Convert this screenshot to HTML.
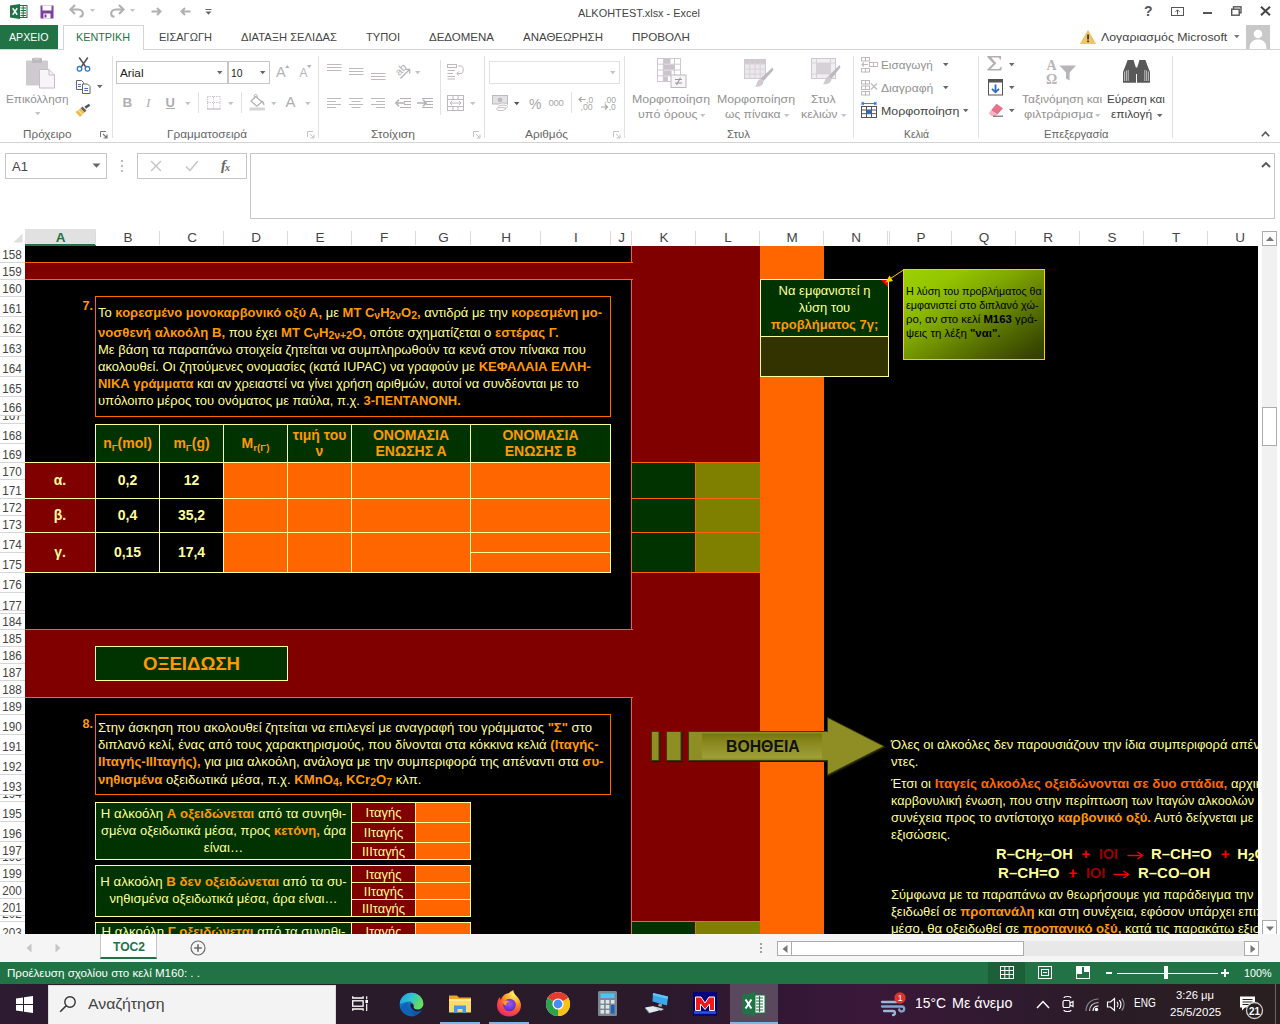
<!DOCTYPE html>
<html><head><meta charset="utf-8">
<style>
*{box-sizing:border-box;margin:0;padding:0}
html,body{width:1280px;height:1024px;overflow:hidden;background:#fff;font-family:"Liberation Sans",sans-serif;}
.a{position:absolute}
#root{position:absolute;left:0;top:0;width:1280px;height:1024px;overflow:hidden;background:#fff}
#title{left:0;top:0;width:1280px;height:25px;background:#fff}
.tab{top:25px;height:24px;font-size:12.5px;color:#444;line-height:25px;white-space:nowrap}
#ribbon{left:0;top:49px;width:1280px;height:94px;background:#fff;border-top:1px solid #d4d4d4;border-bottom:1px solid #d4d4d4}
.gl{font-size:12px;color:#666;top:127px;line-height:14px;white-space:nowrap}
.rl{font-size:12px;color:#a6a6a6;line-height:14px;white-space:nowrap}
.sep{width:1px;background:#e1e1e1;top:56px;height:82px}
#grid{left:0;top:0;width:1258px;height:934px;background:#000;overflow:hidden;clip-path:inset(246px 0 0 25px)}
.ch{top:229px;height:16px;font-size:13.5px;color:#444;text-align:center;line-height:17px}
.rh{left:0;width:25px;font-size:13px;color:#444;text-align:center;background:#fff;overflow:hidden;white-space:nowrap}
.o{color:#ff9900;font-weight:bold}
.y{color:#ffff99}
.t{white-space:nowrap}
.bx{font-size:13px;line-height:15px}
.bx b{font-weight:bold}
.tg{font-size:13.6px;text-align:center;line-height:17px;transform:scaleX(0.95)}
.cm{font-size:11px;color:#000;line-height:14px}
.eq{font-size:14.67px;line-height:17px}
.pl{color:#ff0000;padding:0 3px}
.io{color:#990000;padding:0 3px}
.ar{color:#ff0000;padding:0 3px}
.hl{height:1px;background:#ffff99}
.vl{width:1px;background:#ffff99}
.hc{font-size:14px;font-weight:bold;text-align:center;line-height:16px}
.hc sub{font-size:70%;top:0.3em}
.sm{transform:scaleX(1.018)}
sub{font-size:80%;vertical-align:baseline;position:relative;top:0.24em;line-height:0}
</style></head><body><div id="root">
<style>
#b7l1{transform-origin:0 0;transform:scaleX(0.9993)}
#b7l2{transform-origin:0 0;transform:scaleX(1.0106)}
#b7l3{transform-origin:0 0;transform:scaleX(0.9992)}
#b7l4{transform-origin:0 0;transform:scaleX(0.9990)}
#b7l5{transform-origin:0 0;transform:scaleX(0.9946)}
#b7l6{transform-origin:0 0;transform:scaleX(0.9991)}
#b8l1{transform-origin:0 0;transform:scaleX(1.0090)}
#b8l2{transform-origin:0 0;transform:scaleX(1.0123)}
#b8l3{transform-origin:0 0;transform:scaleX(1.0156)}
#b8l4{transform-origin:0 0;transform:scaleX(1.0094)}
#c1{transform-origin:0 0;transform:scaleX(0.9742)}
#c2{transform-origin:0 0;transform:scaleX(0.9842)}
#c3{transform-origin:0 0;transform:scaleX(1.0326)}
#c4{transform-origin:0 0;transform:scaleX(1.0383)}
#voi{transform-origin:0 0;transform:scaleX(0.9877)}
#r4{transform-origin:0 0;transform:scaleX(0.9757)}
#r5{transform-origin:0 0;transform:scaleX(1.0053)}
#e1a{transform-origin:0 0;transform:scaleX(1.0042)}
#e1c{transform-origin:0 0;transform:scaleX(0.9618)}
#e1e{transform-origin:0 0;transform:scaleX(1.0140)}
#e2a{transform-origin:0 0;transform:scaleX(1.0289)}
#e2c{transform-origin:0 0;transform:scaleX(0.9824)}
#e2e{transform-origin:0 0;transform:scaleX(1.0204)}
#r1{transform-origin:0 0;transform:scaleX(1.0000)}
#r3{transform-origin:0 0;transform:scaleX(1.0052)}
#r7{transform-origin:0 0;transform:scaleX(0.9906)}
#r8{transform-origin:0 0;transform:scaleX(1.0070)}
#r9{transform-origin:0 0;transform:scaleX(1.0124)}
</style>
<!-- TITLE BAR -->
<div id="title" class="a"></div>
<!-- RIBBON TABS -->
<div class="a" style="left:0;top:25px;width:58px;height:24px;background:#217346"></div>
<div id="ribbon" class="a"></div>
<div class="a" style="left:63px;top:25px;width:81px;height:25px;border:1px solid #d4d4d4;border-bottom:none;background:#fff"></div>
<!-- separators -->
<div class="a sep" style="left:112px"></div><div class="a sep" style="left:318px"></div><div class="a sep" style="left:484px"></div>
<div class="a sep" style="left:624px"></div><div class="a sep" style="left:853px"></div><div class="a sep" style="left:978px"></div><div class="a sep" style="left:1172px"></div>
<!-- font boxes -->
<div class="a" style="left:116px;top:61px;width:112px;height:23px;border:1px solid #c6c6c6;background:#fff"></div>
<div class="a" style="left:228px;top:61px;width:42px;height:23px;border:1px solid #c6c6c6;background:#fff"></div>
<div class="a" style="left:489px;top:61px;width:131px;height:23px;border:1px solid #e1e1e1;background:#fff"></div>
<!-- FORMULA BAR -->
<div class="a" style="left:5px;top:153px;width:102px;height:26px;border:1px solid #c6c6c6;background:#fff"></div>
<div class="a" style="left:137px;top:153px;width:110px;height:26px;border:1px solid #c6c6c6;background:#fff"></div>
<div class="a" style="left:250px;top:153px;width:1025px;height:66px;border:1px solid #c6c6c6;background:#fff"></div>
<div class="a t" id="ttl" style="left:578.0px;top:6.5px;font-size:11.6px;line-height:1;height:13.9px;color:#444;transform-origin:0 0;transform:scaleX(0.9421);">ALKOHTEST.xlsx - Excel</div>
<div class="a t" id="tb0" style="left:9.0px;top:31.1px;font-size:11.6px;line-height:1;height:13.9px;color:#fff;transform-origin:0 0;transform:scaleX(0.9149);z-index:5">ΑΡΧΕΙΟ</div>
<div class="a t" id="tb1" style="left:76.0px;top:31.1px;font-size:11.6px;line-height:1;height:13.9px;color:#217346;transform-origin:0 0;transform:scaleX(0.9313);z-index:5">ΚΕΝΤΡΙΚΗ</div>
<div class="a t" id="tb2" style="left:159.0px;top:31.1px;font-size:11.6px;line-height:1;height:13.9px;color:#444;transform-origin:0 0;transform:scaleX(0.9520);">ΕΙΣΑΓΩΓΗ</div>
<div class="a t" id="tb3" style="left:241.0px;top:31.1px;font-size:11.6px;line-height:1;height:13.9px;color:#444;transform-origin:0 0;transform:scaleX(0.9654);">ΔΙΑΤΑΞΗ ΣΕΛΙΔΑΣ</div>
<div class="a t" id="tb4" style="left:366.0px;top:31.1px;font-size:11.6px;line-height:1;height:13.9px;color:#444;transform-origin:0 0;transform:scaleX(0.9594);">ΤΥΠΟΙ</div>
<div class="a t" id="tb5" style="left:429.0px;top:31.1px;font-size:11.6px;line-height:1;height:13.9px;color:#444;transform-origin:0 0;transform:scaleX(0.9924);">ΔΕΔΟΜΕΝΑ</div>
<div class="a t" id="tb6" style="left:523.0px;top:31.1px;font-size:11.6px;line-height:1;height:13.9px;color:#444;transform-origin:0 0;transform:scaleX(0.9917);">ΑΝΑΘΕΩΡΗΣΗ</div>
<div class="a t" id="tb7" style="left:632.0px;top:31.1px;font-size:11.6px;line-height:1;height:13.9px;color:#444;transform-origin:0 0;transform:scaleX(1.0035);">ΠΡΟΒΟΛΗ</div>
<div class="a t" id="acc" style="left:1100.7px;top:30.5px;font-size:11.6px;line-height:1;height:13.9px;color:#444;transform-origin:0 0;transform:scaleX(1.0641);">Λογαριασμός Microsoft</div>
<div class="a t" id="g1" style="left:22.5px;top:127.5px;font-size:11.6px;line-height:1;height:13.9px;color:#666;transform-origin:0 0;transform:scaleX(1.0107);">Πρόχειρο</div>
<div class="a t" id="g2" style="left:167.0px;top:127.5px;font-size:11.6px;line-height:1;height:13.9px;color:#666;transform-origin:0 0;transform:scaleX(1.0151);">Γραμματοσειρά</div>
<div class="a t" id="g3" style="left:371.0px;top:127.5px;font-size:11.6px;line-height:1;height:13.9px;color:#666;transform-origin:0 0;transform:scaleX(1.0395);">Στοίχιση</div>
<div class="a t" id="g4" style="left:525.0px;top:127.5px;font-size:11.6px;line-height:1;height:13.9px;color:#666;transform-origin:0 0;transform:scaleX(1.0219);">Αριθμός</div>
<div class="a t" id="g5" style="left:727.0px;top:127.5px;font-size:11.6px;line-height:1;height:13.9px;color:#666;transform-origin:0 0;transform:scaleX(0.9853);">Στυλ</div>
<div class="a t" id="g6" style="left:903.7px;top:127.5px;font-size:11.6px;line-height:1;height:13.9px;color:#666;transform-origin:0 0;transform:scaleX(0.8934);">Κελιά</div>
<div class="a t" id="g7" style="left:1043.6px;top:127.5px;font-size:11.6px;line-height:1;height:13.9px;color:#666;transform-origin:0 0;transform:scaleX(0.9641);">Επεξεργασία</div>
<div class="a t" id="t1" style="left:6.0px;top:92.5px;font-size:11.6px;line-height:1;height:13.9px;color:#929292;transform-origin:0 0;transform:scaleX(1.0106);">Επικόλληση</div>
<div class="a t" id="t2" style="left:632.0px;top:92.5px;font-size:11.6px;line-height:1;height:13.9px;color:#929292;transform-origin:0 0;transform:scaleX(1.0624);">Μορφοποίηση</div>
<div class="a t" id="t3" style="left:638.0px;top:108.1px;font-size:11.6px;line-height:1;height:13.9px;color:#929292;transform-origin:0 0;transform:scaleX(1.0733);">υπό όρους</div>
<div class="a t" id="t4" style="left:717.0px;top:92.5px;font-size:11.6px;line-height:1;height:13.9px;color:#929292;transform-origin:0 0;transform:scaleX(1.0624);">Μορφοποίηση</div>
<div class="a t" id="t5" style="left:724.5px;top:108.1px;font-size:11.6px;line-height:1;height:13.9px;color:#929292;transform-origin:0 0;transform:scaleX(1.0413);">ως πίνακα</div>
<div class="a t" id="t6" style="left:811.0px;top:92.5px;font-size:11.6px;line-height:1;height:13.9px;color:#929292;transform-origin:0 0;transform:scaleX(1.0495);">Στυλ</div>
<div class="a t" id="t7" style="left:801.0px;top:108.1px;font-size:11.6px;line-height:1;height:13.9px;color:#929292;transform-origin:0 0;transform:scaleX(1.0676);">κελιών</div>
<div class="a t" id="t8" style="left:880.7px;top:58.5px;font-size:11.6px;line-height:1;height:13.9px;color:#929292;transform-origin:0 0;transform:scaleX(1.0104);">Εισαγωγή</div>
<div class="a t" id="t9" style="left:880.7px;top:81.5px;font-size:11.6px;line-height:1;height:13.9px;color:#929292;transform-origin:0 0;transform:scaleX(1.0440);">Διαγραφή</div>
<div class="a t" id="t10" style="left:880.7px;top:104.5px;font-size:11.6px;line-height:1;height:13.9px;color:#444;transform-origin:0 0;transform:scaleX(1.0664);">Μορφοποίηση</div>
<div class="a t" id="t11" style="left:1021.8px;top:92.5px;font-size:11.6px;line-height:1;height:13.9px;color:#929292;transform-origin:0 0;transform:scaleX(1.0359);">Ταξινόμηση και</div>
<div class="a t" id="t12" style="left:1023.7px;top:108.1px;font-size:11.6px;line-height:1;height:13.9px;color:#929292;transform-origin:0 0;transform:scaleX(1.0869);">φιλτράρισμα</div>
<div class="a t" id="t13" style="left:1107.3px;top:92.5px;font-size:11.6px;line-height:1;height:13.9px;color:#444;transform-origin:0 0;transform:scaleX(1.0050);">Εύρεση και</div>
<div class="a t" id="t14" style="left:1111.3px;top:108.1px;font-size:11.6px;line-height:1;height:13.9px;color:#444;transform-origin:0 0;transform:scaleX(1.0284);">επιλογή</div>
<div class="a t" id="fn" style="left:119.5px;top:66.5px;font-size:11.6px;line-height:1;height:13.9px;color:#222;transform-origin:0 0;transform:scaleX(1.0128);">Arial</div>
<div class="a t" id="fs" style="left:230.5px;top:66.5px;font-size:11.6px;line-height:1;height:13.9px;color:#222;transform-origin:0 0;transform:scaleX(0.8910);">10</div>
<!-- TITLE BAR ICONS -->
<svg class="a" style="left:9.5px;top:4px" width="18" height="15" viewBox="0 0 18 15"><rect x="8" y="1.5" width="9" height="12" fill="#fff" stroke="#217346" stroke-width="1"/><path d="M10.5 4 H16 M10.5 6.5 H16 M10.5 9 H16 M10.5 11.5 H16 M13.2 2 V13" stroke="#217346" stroke-width="1" fill="none"/><path d="M0 1.5 L10 0 V15 L0 13.5 Z" fill="#217346"/><path d="M2.7 4.3 L7.2 10.7 M7.2 4.3 L2.7 10.7" stroke="#fff" stroke-width="1.5"/></svg>
<svg class="a" style="left:40px;top:4.5px" width="14" height="14" viewBox="0 0 14 14"><path d="M0.5 0.5 H13.5 V13.5 H0.5 Z" fill="#7e3f9c"/><rect x="2.5" y="0.5" width="9" height="5" fill="#fff"/><rect x="3.5" y="8.5" width="7" height="5" fill="#fff"/><rect x="4.5" y="9.5" width="2" height="3" fill="#7e3f9c"/></svg>
<!-- undo / redo -->
<svg class="a" style="left:69px;top:4px" width="16" height="14" viewBox="0 0 16 14"><path d="M1.5 5.5 H9 C12.5 5.5 13.8 8 13.8 9.5 C13.8 11.5 12.5 12.8 10.5 12.8" fill="none" stroke="#b0b0b0" stroke-width="2.1"/><path d="M6 1 L1.5 5.5 L6 10" fill="none" stroke="#b0b0b0" stroke-width="2.1"/></svg>
<svg class="a" style="left:89.5px;top:9px" width="6" height="4"><path d="M0 0 H5 L2.5 3 Z" fill="#c4c4c4"/></svg>
<svg class="a" style="left:109px;top:4px" width="16" height="14" viewBox="0 0 16 14"><path d="M14.5 5.5 H7 C3.5 5.5 2.2 8 2.2 9.5 C2.2 11.5 3.5 12.8 5.5 12.8" fill="none" stroke="#b0b0b0" stroke-width="2.1"/><path d="M10 1 L14.5 5.5 L10 10" fill="none" stroke="#b0b0b0" stroke-width="2.1"/></svg>
<svg class="a" style="left:129.5px;top:9px" width="6" height="4"><path d="M0 0 H5 L2.5 3 Z" fill="#c4c4c4"/></svg>
<svg class="a" style="left:151px;top:7px" width="11" height="9"><path d="M0.5 4.5 H9.5 M6 1 L9.5 4.5 L6 8" fill="none" stroke="#b0b0b0" stroke-width="2"/></svg>
<svg class="a" style="left:179.5px;top:7px" width="11" height="9"><path d="M10.5 4.5 H1.5 M5 1 L1.5 4.5 L5 8" fill="none" stroke="#b0b0b0" stroke-width="2"/></svg>
<svg class="a" style="left:205px;top:9px" width="7" height="6"><path d="M0.5 0.5 H6.5" stroke="#666" stroke-width="1"/><path d="M0.5 2.5 H6.5 L3.5 5.8 Z" fill="#666"/></svg>
<!-- window buttons -->
<div class="a t" style="left:1144px;top:3px;font-size:14px;font-weight:bold;color:#555;line-height:16px">?</div>
<svg class="a" style="left:1171px;top:7px" width="13" height="9"><rect x="0.5" y="0.5" width="12" height="8" fill="none" stroke="#555" stroke-width="1"/><path d="M6.5 7.5 V3 M4.5 4.8 L6.5 2.8 L8.5 4.8" fill="none" stroke="#555" stroke-width="1"/></svg>
<div class="a" style="left:1202.5px;top:12px;width:9px;height:2px;background:#555"></div>
<svg class="a" style="left:1231px;top:6px" width="11" height="10"><rect x="2.5" y="0.8" width="7.5" height="6" fill="none" stroke="#555" stroke-width="1.4"/><rect x="0.7" y="3.2" width="7.5" height="6" fill="#fff" stroke="#555" stroke-width="1.4"/></svg>
<svg class="a" style="left:1259.5px;top:6px" width="11" height="10"><path d="M1 0.8 L10 9.2 M10 0.8 L1 9.2" stroke="#444" stroke-width="2" fill="none"/></svg>
<!-- account -->
<svg class="a" style="left:1080px;top:29.5px" width="16" height="14" viewBox="0 0 16 14"><path d="M8 0.5 L15.5 13.5 H0.5 Z" fill="#efc36a" stroke="#e0b050" stroke-width="0.6"/><rect x="7.2" y="4.5" width="1.7" height="5" fill="#333"/><rect x="7.2" y="10.5" width="1.7" height="1.7" fill="#333"/></svg>
<svg class="a" style="left:1234px;top:35px" width="6" height="4"><path d="M0 0 H5.5 L2.75 3.2 Z" fill="#777"/></svg>
<svg class="a" style="left:1246px;top:25px" width="24" height="24" viewBox="0 0 24 24"><rect width="24" height="24" fill="#c8c8c8"/><circle cx="12" cy="9" r="4.3" fill="#fff"/><path d="M3.5 24 C3.5 17 7 14.5 12 14.5 C17 14.5 20.5 17 20.5 24 Z" fill="#fff"/></svg>
<svg class="a" style="left:1261px;top:131px" width="9" height="6"><path d="M0.8 5.2 L4.5 1.2 L8.2 5.2" fill="none" stroke="#555" stroke-width="1.6"/></svg>
<!-- CLIPBOARD GROUP -->
<svg class="a" style="left:25px;top:57px" width="31" height="32" viewBox="0 0 31 32"><rect x="1" y="3.5" width="22" height="25" rx="1" fill="#cfcacf"/><rect x="7" y="1" width="10" height="5" rx="1" fill="#bdb8bd"/><rect x="9.5" y="0.5" width="5" height="2.5" fill="#cfcacf"/><path d="M14.5 12.5 H24 L29.5 18 V31 H14.5 Z" fill="#f7f5f7" stroke="#c4bfc4" stroke-width="1"/><path d="M24 12.5 V18 H29.5" fill="none" stroke="#c4bfc4" stroke-width="1"/></svg>
<svg class="a" style="left:35px;top:112px" width="6" height="4"><path d="M0 0 H5.5 L2.75 3.2 Z" fill="#c4c4c4"/></svg>
<!-- scissors -->
<svg class="a" style="left:76px;top:57px" width="15" height="15" viewBox="0 0 15 15"><path d="M3.2 0.5 L9.8 10 M11.8 0.5 L5.2 10" stroke="#555" stroke-width="1.5" fill="none"/><circle cx="3.5" cy="11.8" r="2.3" fill="none" stroke="#3b78c4" stroke-width="1.3"/><circle cx="11.5" cy="11.8" r="2.3" fill="none" stroke="#3b78c4" stroke-width="1.3"/></svg>
<!-- copy -->
<svg class="a" style="left:75.5px;top:80px" width="15" height="14" viewBox="0 0 15 14"><path d="M0.5 0.5 H5.5 L7.5 2.5 V9.5 H0.5 Z" fill="#fff" stroke="#666" stroke-width="1"/><path d="M6.5 4 H11.5 L14 6.5 V13.5 H6.5 Z" fill="#fff" stroke="#666" stroke-width="1"/><path d="M2 4.5 H5 M2 6.5 H5 M8.3 8.5 H12 M8.3 10.5 H12" stroke="#3b78c4" stroke-width="1"/></svg>
<svg class="a" style="left:97px;top:85px" width="6" height="4"><path d="M0 0 H5.5 L2.75 3.2 Z" fill="#666"/></svg>
<!-- format painter -->
<svg class="a" style="left:75px;top:103px" width="16" height="15" viewBox="0 0 16 15"><path d="M9.5 3.5 L14 0.8 L15.2 2.8 L11 5.8 Z" fill="#555"/><path d="M7.5 3.5 L11.5 7.5 L9.5 9.5 L5.5 5.5 Z" fill="#666"/><path d="M5.5 5.5 L9.5 9.5 L5 14 L0.5 9 Z" fill="#f2b84b"/><path d="M3.2 7.2 L7.5 11.5" stroke="#fbe2a6" stroke-width="1.2"/></svg>
<!-- launchers -->
<svg class="a lch" style="left:100px;top:131px" width="8" height="8"><path d="M0.5 6 V0.5 H6" fill="none" stroke="#777" stroke-width="1"/><path d="M3 3 L7 7 M7 3.6 V7 H3.6" fill="none" stroke="#777" stroke-width="1.2"/></svg>
<svg class="a lch" style="left:306.5px;top:131px" width="8" height="8"><path d="M0.5 6 V0.5 H6" fill="none" stroke="#c4c4c4" stroke-width="1"/><path d="M3 3 L7 7 M7 3.6 V7 H3.6" fill="none" stroke="#c4c4c4" stroke-width="1"/></svg>
<svg class="a lch" style="left:472.5px;top:131px" width="8" height="8"><path d="M0.5 6 V0.5 H6" fill="none" stroke="#c4c4c4" stroke-width="1"/><path d="M3 3 L7 7 M7 3.6 V7 H3.6" fill="none" stroke="#c4c4c4" stroke-width="1"/></svg>
<svg class="a lch" style="left:613px;top:131px" width="8" height="8"><path d="M0.5 6 V0.5 H6" fill="none" stroke="#c4c4c4" stroke-width="1"/><path d="M3 3 L7 7 M7 3.6 V7 H3.6" fill="none" stroke="#c4c4c4" stroke-width="1"/></svg>

<!-- FONT GROUP -->
<svg class="a" style="left:217px;top:71px" width="6" height="4"><path d="M0 0 H5.5 L2.75 3.2 Z" fill="#666"/></svg>
<svg class="a" style="left:260px;top:71px" width="6" height="4"><path d="M0 0 H5.5 L2.75 3.2 Z" fill="#666"/></svg>
<div class="a t" style="left:276px;top:64px;font-size:14.5px;color:#b4b4b4;line-height:16px">A</div>
<svg class="a" style="left:285px;top:64.5px" width="5" height="3.5"><path d="M0 3.2 L2.3 0 L4.6 3.2 Z" fill="#b4b4b4"/></svg>
<div class="a t" style="left:299.5px;top:66.5px;font-size:12px;color:#b4b4b4;line-height:13px">A</div>
<svg class="a" style="left:306.5px;top:65px" width="5" height="3.5"><path d="M0 0 L4.6 0 L2.3 3.2 Z" fill="#b4b4b4"/></svg>
<div class="a t" style="left:122.5px;top:94.5px;font-size:13.5px;font-weight:bold;color:#b0b0b0;line-height:16px">B</div>
<div class="a t" style="left:146px;top:94.5px;font-size:13.5px;font-style:italic;color:#b0b0b0;line-height:16px;font-family:'Liberation Serif',serif">I</div>
<div class="a t" style="left:165.5px;top:94.5px;font-size:13px;font-weight:bold;color:#adadad;line-height:16px;border-bottom:1.3px solid #adadad;height:14.5px">U</div>
<svg class="a" style="left:185px;top:102px" width="6" height="4"><path d="M0 0 H5.5 L2.75 3.2 Z" fill="#c4c4c4"/></svg>
<div class="a" style="left:198px;top:92px;width:1px;height:21px;background:#e1e1e1"></div>
<svg class="a" style="left:207px;top:96px" width="14" height="14" viewBox="0 0 14 14"><g fill="none" stroke="#bfb6c1" stroke-width="1" stroke-dasharray="1 1.2"><path d="M0.5 0.5 H13.5"/><path d="M0.5 6.5 H13.5"/><path d="M0.5 0.5 V12.5"/><path d="M6.5 0.5 V12.5"/><path d="M13 0.5 V12.5"/></g><path d="M0 13 H13.5" stroke="#bfb6c1" stroke-width="1.2"/></svg>
<svg class="a" style="left:228px;top:102px" width="6" height="4"><path d="M0 0 H5.5 L2.75 3.2 Z" fill="#c4c4c4"/></svg>
<div class="a" style="left:241px;top:92px;width:1px;height:21px;background:#e1e1e1"></div>
<svg class="a" style="left:249px;top:94px" width="17" height="17" viewBox="0 0 17 17"><path d="M6.8 2.5 L12.8 8 L7.8 12.3 L2 7 Z" fill="#fff" stroke="#b5b0b5" stroke-width="1.2"/><path d="M5.3 5 V1.8 C5.3 0 8.2 0 8.2 1.8 V3.8" fill="none" stroke="#b5b0b5" stroke-width="1"/><path d="M12.3 6 C14.8 7 15.8 9.2 15.3 11.8 C14 11 13.2 9 12.3 6 Z" fill="#b5b0b5"/><rect x="0.5" y="13.5" width="15.5" height="3" fill="#d8d5d8"/></svg>
<svg class="a" style="left:271px;top:102px" width="6" height="4"><path d="M0 0 H5.5 L2.75 3.2 Z" fill="#c4c4c4"/></svg>
<div class="a t" style="left:285.5px;top:94px;font-size:15px;color:#adadad;line-height:16px">A</div>
<svg class="a" style="left:305px;top:102px" width="6" height="4"><path d="M0 0 H5.5 L2.75 3.2 Z" fill="#c4c4c4"/></svg>

<!-- ALIGNMENT GROUP -->
<svg class="a" style="left:326.5px;top:63px" width="60" height="18" viewBox="0 0 60 18"><g stroke="#bdb9bd" stroke-width="1" fill="none"><path d="M0 1.5 H14.5 M0 4.5 H14.5 M0 7.5 H14.5"/><path d="M22 5.5 H36.5 M22 8.5 H36.5 M22 11.5 H36.5"/><path d="M44 10.5 H58.5 M44 13.5 H58.5 M44 16.5 H58.5"/></g></svg>
<svg class="a" style="left:394px;top:60px" width="19" height="20" viewBox="0 0 19 20"><text x="0" y="0" font-family="Liberation Sans" font-size="10.5" fill="#b5b0b5" transform="translate(5.2 16.2) rotate(-45)">ab</text><path d="M6.5 18.5 L15 10" fill="none" stroke="#b5b0b5" stroke-width="1.3"/><path d="M11.2 9.3 H15.7 V13.8" fill="none" stroke="#b5b0b5" stroke-width="1.3"/></svg>
<svg class="a" style="left:415px;top:71px" width="6" height="4"><path d="M0 0 H5.5 L2.75 3.2 Z" fill="#c4c4c4"/></svg>
<div class="a" style="left:440px;top:60px;width:1px;height:55px;background:#e1e1e1"></div>
<svg class="a" style="left:447px;top:64px" width="18" height="16" viewBox="0 0 18 16"><g fill="none" stroke="#bdb9bd" stroke-width="1"><rect x="0.5" y="0.5" width="9" height="3"/><path d="M0.5 6.5 H8 M0.5 9.5 H6 M0.5 12.5 H8 M0.5 15 H8"/><path d="M11 2 H14 C17 2 17 9.5 14 9.5 H10 M12 7.3 L9.8 9.5 L12 11.7"/></g></svg>
<svg class="a" style="left:326.5px;top:97px" width="60" height="12" viewBox="0 0 60 12"><g stroke="#bdb9bd" stroke-width="1" fill="none"><path d="M0 1.5 H14 M0 4.5 H9 M0 7.5 H14 M0 10.5 H9"/><path d="M22 1.5 H36 M24.5 4.5 H33.5 M22 7.5 H36 M24.5 10.5 H33.5"/><path d="M44 1.5 H58 M49 4.5 H58 M44 7.5 H58 M49 10.5 H58"/></g></svg>
<svg class="a" style="left:395px;top:97px" width="39" height="12" viewBox="0 0 39 12"><g stroke="#b5b0b5" stroke-width="1" fill="none"><path d="M5 1.5 H16 M9 4.5 H16 M9 7.5 H16 M5 10.5 H16"/><path d="M10 6 H1 M4 2.8 L0.8 6 L4 9.2" stroke-width="1.5"/><path d="M27 1.5 H38 M31 4.5 H38 M31 7.5 H38 M27 10.5 H38"/><path d="M22 6 H31 M28 2.8 L31.2 6 L28 9.2" stroke-width="1.5"/></g></svg>
<svg class="a" style="left:447px;top:95px" width="17" height="16" viewBox="0 0 17 16"><g fill="none" stroke="#bdb9bd" stroke-width="1"><rect x="0.5" y="0.5" width="16" height="15"/><path d="M0.5 4.5 H16.5 M0.5 11.5 H16.5 M6 0.5 V4.5 M11 0.5 V4.5 M6 11.5 V15.5 M11 11.5 V15.5"/><path d="M3 8 H14 M5 6 L3 8 L5 10 M12 6 L14 8 L12 10"/></g></svg>
<svg class="a" style="left:470px;top:102px" width="6" height="4"><path d="M0 0 H5.5 L2.75 3.2 Z" fill="#c4c4c4"/></svg>
<!-- NUMBER GROUP -->
<svg class="a" style="left:610px;top:71px" width="6" height="4"><path d="M0 0 H5.5 L2.75 3.2 Z" fill="#c4c4c4"/></svg>
<svg class="a" style="left:492px;top:95px" width="17" height="16" viewBox="0 0 17 16"><rect x="0.5" y="0.5" width="15" height="8.5" fill="#e4e1e4" stroke="#bdb9bd" stroke-width="1"/><circle cx="8" cy="4.8" r="2.4" fill="#bdb9bd"/><ellipse cx="11" cy="9.5" rx="4.5" ry="1.6" fill="#fff" stroke="#bdb9bd" stroke-width="0.9"/><ellipse cx="11" cy="11.7" rx="4.5" ry="1.6" fill="#fff" stroke="#bdb9bd" stroke-width="0.9"/><ellipse cx="9" cy="14" rx="4.5" ry="1.6" fill="#fff" stroke="#bdb9bd" stroke-width="0.9"/></svg>
<svg class="a" style="left:513.5px;top:102px" width="6" height="4"><path d="M0 0 H5.5 L2.75 3.2 Z" fill="#555"/></svg>
<div class="a t" style="left:528.5px;top:95.5px;font-size:15.5px;color:#a6a6a6;line-height:16px;transform-origin:0 0;transform:scaleX(0.9)">%</div>
<div class="a t" style="left:548.5px;top:98px;font-size:9.5px;color:#a6a6a6;line-height:10px;letter-spacing:-0.3px">000</div>
<div class="a" style="left:571px;top:92px;width:1px;height:21px;background:#e1e1e1"></div>
<svg class="a" style="left:578px;top:95.5px" width="17" height="15" viewBox="0 0 17 15"><path d="M7.5 3.5 H1.2 M3.6 1 L1 3.5 L3.6 6" fill="none" stroke="#a8a8a8" stroke-width="1.2"/><text x="8.2" y="6.5" font-family="Liberation Sans" font-size="8.3" fill="#a6a6a6" textLength="7" lengthAdjust="spacingAndGlyphs">,0</text><text x="2.5" y="14" font-family="Liberation Sans" font-size="8.3" fill="#a6a6a6" textLength="12" lengthAdjust="spacingAndGlyphs">,00</text></svg>
<svg class="a" style="left:600px;top:95.5px" width="17" height="15" viewBox="0 0 17 15"><text x="4" y="6.5" font-family="Liberation Sans" font-size="8.3" fill="#a6a6a6" textLength="12" lengthAdjust="spacingAndGlyphs">,00</text><path d="M1 11 H7.3 M4.9 8.5 L7.5 11 L4.9 13.5" fill="none" stroke="#a8a8a8" stroke-width="1.2"/><text x="8.7" y="14" font-family="Liberation Sans" font-size="8.3" fill="#a6a6a6" textLength="7" lengthAdjust="spacingAndGlyphs">,0</text></svg>

<!-- STYLES GROUP -->
<svg class="a" style="left:657px;top:58px" width="30" height="30" viewBox="0 0 30 30"><g fill="none" stroke="#cfc9cf" stroke-width="1"><rect x="0.5" y="0.5" width="23" height="23"/><path d="M0.5 6.2 H23.5 M0.5 12 H23.5 M0.5 17.8 H23.5 M6.3 0.5 V23.5 M17.5 0.5 V23.5"/></g><rect x="6.5" y="1" width="7" height="4.8" fill="#c9c4c9"/><rect x="6.5" y="6.8" width="11" height="4.8" fill="#c9c4c9"/><rect x="6.5" y="12.6" width="8" height="4.8" fill="#c9c4c9"/><rect x="6.5" y="18.4" width="4.5" height="4.8" fill="#c9c4c9"/><rect x="14" y="17" width="15" height="12.5" fill="#f7f5f7" stroke="#bdb9bd" stroke-width="1"/><path d="M18 21.5 H25 M18 25 H25 M23.5 19.5 L19.5 27" stroke="#999" stroke-width="1.1" fill="none"/></svg>
<svg class="a" style="left:743.5px;top:59px" width="30" height="30" viewBox="0 0 30 30"><rect x="0.5" y="0.5" width="21" height="19" fill="#ebe7eb" stroke="#cfc9cf"/><rect x="0.5" y="0.5" width="21" height="4.5" fill="#cfc9cf"/><path d="M0.5 5 H21.5 M0.5 10 H21.5 M0.5 15 H21.5 M5.8 0.5 V19.5 M11 0.5 V19.5 M16.2 0.5 V19.5" stroke="#d8d2d8" stroke-width="1" fill="none"/><path d="M28.5 8.5 L29.5 11 L19.5 22 L16 20 Z" fill="#bdb9bd"/><path d="M16 20 L19.5 22 C19.5 26 16 28.5 11 27.5 C13 26 12.5 22 16 20 Z" fill="#cfcacf"/></svg>
<svg class="a" style="left:811px;top:58px" width="30" height="29" viewBox="0 0 30 29"><rect x="0.5" y="0.5" width="24" height="20" fill="#f1eef1" stroke="#cfc9cf"/><path d="M0.5 5 H24.5 M0.5 16 H24.5 M5.5 0.5 V20.5 M19.5 0.5 V20.5" stroke="#d8d2d8" stroke-width="1" fill="none"/><rect x="5.5" y="5" width="14" height="11" fill="#d6d1d6"/><path d="M28.5 7 L29.5 9.5 L20.5 20.5 L17 18.5 Z" fill="#bdb9bd"/><path d="M17 18.5 L20.5 20.5 C20.5 24.5 17 27 12 26 C14 24.5 13.5 20.5 17 18.5 Z" fill="#cfcacf"/></svg>
<svg class="a" style="left:699.5px;top:114px" width="6" height="4"><path d="M0 0 H5.5 L2.75 3.2 Z" fill="#c4c4c4"/></svg>
<svg class="a" style="left:783.5px;top:114px" width="6" height="4"><path d="M0 0 H5.5 L2.75 3.2 Z" fill="#c4c4c4"/></svg>
<svg class="a" style="left:840.5px;top:114px" width="6" height="4"><path d="M0 0 H5.5 L2.75 3.2 Z" fill="#c4c4c4"/></svg>

<!-- CELLS GROUP -->
<svg class="a" style="left:860.5px;top:57px" width="17" height="16" viewBox="0 0 17 16"><g fill="none" stroke="#bdb9bd" stroke-width="1"><rect x="0.5" y="0.5" width="4" height="3.5"/><rect x="4.5" y="0.5" width="4" height="3.5"/><rect x="0.5" y="11.5" width="4" height="3.5"/><rect x="4.5" y="11.5" width="4" height="3.5"/><rect x="8.5" y="5.5" width="4" height="4"/><rect x="12.5" y="5.5" width="4" height="4"/><path d="M7 7.5 H1 M3 5.5 L1 7.5 L3 9.5" stroke-width="1.1"/></g></svg>
<svg class="a" style="left:860.5px;top:79.5px" width="17" height="16" viewBox="0 0 17 16"><g fill="none" stroke="#bdb9bd" stroke-width="1"><rect x="0.5" y="0.5" width="4" height="3.5"/><rect x="4.5" y="0.5" width="4" height="3.5"/><rect x="0.5" y="11.5" width="4" height="3.5"/><rect x="4.5" y="11.5" width="4" height="3.5"/><rect x="0.5" y="6" width="4" height="3.5"/><rect x="4.5" y="6" width="4" height="3.5"/><path d="M10 3.5 L16 9.5 M16 3.5 L10 9.5" stroke-width="1.2"/></g></svg>
<svg class="a" style="left:860.5px;top:101px" width="17" height="17" viewBox="0 0 17 17"><path d="M1 2.5 H15 M1 0.8 V4.2 M15 0.8 V4.2 M3 1 L1 2.5 L3 4 M13 1 L15 2.5 L13 4" fill="none" stroke="#2b6cc4" stroke-width="0.9"/><rect x="0.5" y="5.5" width="15" height="11" fill="#fff" stroke="#555" stroke-width="1"/><path d="M0.5 9 H15.5 M0.5 12.7 H15.5 M5.5 5.5 V16.5 M10.5 5.5 V16.5" stroke="#555" stroke-width="1" fill="none"/><rect x="5.5" y="9" width="5" height="3.7" fill="#2b6cc4"/></svg>
<svg class="a" style="left:942.5px;top:63px" width="6" height="4"><path d="M0 0 H5.5 L2.75 3.2 Z" fill="#666"/></svg>
<svg class="a" style="left:942.5px;top:86px" width="6" height="4"><path d="M0 0 H5.5 L2.75 3.2 Z" fill="#666"/></svg>
<svg class="a" style="left:963px;top:109px" width="6" height="4"><path d="M0 0 H5.5 L2.75 3.2 Z" fill="#666"/></svg>

<!-- EDITING GROUP -->
<svg class="a" style="left:987px;top:56px" width="16" height="15" viewBox="0 0 16 15"><path d="M0.3 0 H14 V3.6 H12.8 C12.6 2 12 1.6 10.5 1.6 H4.2 L9.3 7.2 L3.6 13 H11 C12.6 13 13.2 12.4 13.6 10.8 H14.8 L14.3 14.6 H0.3 V13.6 L6.3 7.6 L0.3 1 Z" fill="#b2aeb2"/></svg>
<svg class="a" style="left:1009px;top:63px" width="6" height="4"><path d="M0 0 H5.5 L2.75 3.2 Z" fill="#666"/></svg>
<svg class="a" style="left:987.5px;top:79px" width="16" height="17" viewBox="0 0 16 17"><rect x="0.5" y="0.5" width="14" height="15.5" fill="#fff" stroke="#555" stroke-width="1"/><rect x="0.5" y="0.5" width="14" height="3" fill="#555"/><path d="M7.5 5.5 V13 M4 9.8 L7.5 13.3 L11 9.8" fill="none" stroke="#2b6cc4" stroke-width="1.8"/></svg>
<svg class="a" style="left:1009px;top:86px" width="6" height="4"><path d="M0 0 H5.5 L2.75 3.2 Z" fill="#666"/></svg>
<svg class="a" style="left:987.5px;top:103px" width="17" height="14" viewBox="0 0 17 14"><path d="M8.5 0.8 L15 5.2 L9.5 11.5 L3 7.2 Z" fill="#e8728a"/><path d="M3 7.2 L9.5 11.5 L8 13 H3.5 L0.8 10.5 Z" fill="#f3b4c0"/><path d="M5 13.2 H15" stroke="#555" stroke-width="1"/></svg>
<svg class="a" style="left:1009px;top:109px" width="6" height="4"><path d="M0 0 H5.5 L2.75 3.2 Z" fill="#666"/></svg>
<svg class="a" style="left:1045px;top:59px" width="33" height="27" viewBox="0 0 33 27"><text x="1.5" y="11.3" font-family="Liberation Serif" font-weight="bold" font-size="14" fill="#b8b4b8">A</text><text x="1" y="24.6" font-family="Liberation Serif" font-weight="bold" font-size="14" fill="#b8b4b8">Ω</text><path d="M14.5 6.5 H31 L24.6 13.5 V21.5 L21 19.5 V13.5 Z" fill="#b8b4b8"/></svg>
<svg class="a" style="left:1122px;top:59px" width="29" height="25" viewBox="0 0 29 25"><g fill="#595959"><path d="M5.6 1 H11.6 L12.4 4 L14 9 V23.8 H1 V13 L3.2 7.5 Z"/><path d="M23.4 1 H17.4 L16.6 4 L15 9 V23.8 H28 V13 L25.8 7.5 Z"/><rect x="12" y="8.5" width="5" height="6.5"/></g><path d="M2.6 12.5 V22 M4.4 11.5 V22 M6.2 11 V22 M22.8 11 V22 M24.6 11.5 V22 M26.4 12.5 V22" stroke="#d8d8d8" stroke-width="0.8"/></svg>
<svg class="a" style="left:1095px;top:114px" width="6" height="4"><path d="M0 0 H5.5 L2.75 3.2 Z" fill="#c4c4c4"/></svg>
<svg class="a" style="left:1156.5px;top:114px" width="6" height="4"><path d="M0 0 H5.5 L2.75 3.2 Z" fill="#666"/></svg>
<!-- FORMULA BAR details -->
<div class="a t" style="left:12px;top:159px;font-size:13px;color:#444;line-height:15px">A1</div>
<svg class="a" style="left:92px;top:163px" width="9" height="6"><path d="M0.5 0.5 L8.5 0.5 L4.5 4.8 Z" fill="#666"/></svg>
<div class="a" style="left:121px;top:160px;width:2px;height:2px;background:#bbb"></div>
<div class="a" style="left:121px;top:165px;width:2px;height:2px;background:#bbb"></div>
<div class="a" style="left:121px;top:170px;width:2px;height:2px;background:#bbb"></div>
<svg class="a" style="left:150px;top:160px" width="12" height="12"><path d="M1 1 L11 11 M11 1 L1 11" stroke="#c4c4c4" stroke-width="1.4" fill="none"/></svg>
<svg class="a" style="left:185px;top:160px" width="14" height="12"><path d="M1 6.5 L5 10.5 L13 1" stroke="#c4c4c4" stroke-width="1.5" fill="none"/></svg>
<div class="a t" style="left:221px;top:156px;font-family:'Liberation Serif',serif;font-style:italic;font-weight:bold;font-size:15px;color:#666;line-height:18px">f<span style="font-size:10px;position:relative;top:1px;left:-1px">x</span></div>
<svg class="a" style="left:1261px;top:161px" width="10" height="7"><path d="M1 6 L5 2 L9 6" stroke="#555" stroke-width="1.8" fill="none"/></svg>
<!-- COLUMN HEADERS -->
<div class="a" style="left:0;top:226px;width:1259px;height:20px;background:#fff"></div>
<svg class="a" style="left:12.5px;top:232.5px" width="10" height="10"><path d="M9.5 0.5 L9.5 9.5 L0.5 9.5 Z" fill="#dedede"/></svg>
<div class="a" style="left:25px;top:229px;width:71px;height:17px;background:#e1e1e1;border-bottom:2px solid #217346"></div>
<div class="a ch" style="left:25px;width:71px;color:#217346;font-weight:bold">A</div>
<div class="a" style="left:95px;top:231px;width:1px;height:14px;background:#dadada"></div>
<div class="a ch" style="left:96px;width:64px">B</div>
<div class="a" style="left:159px;top:231px;width:1px;height:14px;background:#dadada"></div>
<div class="a ch" style="left:160px;width:64px">C</div>
<div class="a" style="left:223px;top:231px;width:1px;height:14px;background:#dadada"></div>
<div class="a ch" style="left:224px;width:64px">D</div>
<div class="a" style="left:287px;top:231px;width:1px;height:14px;background:#dadada"></div>
<div class="a ch" style="left:288px;width:64px">E</div>
<div class="a" style="left:351px;top:231px;width:1px;height:14px;background:#dadada"></div>
<div class="a ch" style="left:352px;width:64px">F</div>
<div class="a" style="left:415px;top:231px;width:1px;height:14px;background:#dadada"></div>
<div class="a ch" style="left:416px;width:55px">G</div>
<div class="a" style="left:470px;top:231px;width:1px;height:14px;background:#dadada"></div>
<div class="a ch" style="left:471px;width:70px">H</div>
<div class="a" style="left:540px;top:231px;width:1px;height:14px;background:#dadada"></div>
<div class="a ch" style="left:541px;width:70px">I</div>
<div class="a" style="left:610px;top:231px;width:1px;height:14px;background:#dadada"></div>
<div class="a ch" style="left:611px;width:21px">J</div>
<div class="a" style="left:631px;top:231px;width:1px;height:14px;background:#dadada"></div>
<div class="a ch" style="left:632px;width:64px">K</div>
<div class="a" style="left:695px;top:231px;width:1px;height:14px;background:#dadada"></div>
<div class="a ch" style="left:696px;width:64px">L</div>
<div class="a" style="left:759px;top:231px;width:1px;height:14px;background:#dadada"></div>
<div class="a ch" style="left:760px;width:64px">M</div>
<div class="a" style="left:823px;top:231px;width:1px;height:14px;background:#dadada"></div>
<div class="a ch" style="left:824px;width:64px">N</div>
<div class="a" style="left:887px;top:231px;width:1px;height:14px;background:#dadada"></div>
<div class="a ch" style="left:890px;width:62px">P</div>
<div class="a" style="left:951px;top:231px;width:1px;height:14px;background:#dadada"></div>
<div class="a ch" style="left:952px;width:64px">Q</div>
<div class="a" style="left:1015px;top:231px;width:1px;height:14px;background:#dadada"></div>
<div class="a ch" style="left:1016px;width:64px">R</div>
<div class="a" style="left:1079px;top:231px;width:1px;height:14px;background:#dadada"></div>
<div class="a ch" style="left:1080px;width:64px">S</div>
<div class="a" style="left:1143px;top:231px;width:1px;height:14px;background:#dadada"></div>
<div class="a ch" style="left:1144px;width:64px">T</div>
<div class="a" style="left:1207px;top:231px;width:1px;height:14px;background:#dadada"></div>
<div class="a ch" style="left:1208px;width:64px">U</div>
<div class="a" style="left:889px;top:231px;width:1px;height:14px;background:#dadada"></div>
<div class="a" style="left:1259px;top:226px;width:21px;height:19px;background:#fff"></div>
<!-- GRID -->
<div id="grid" class="a">
<!-- big colour blocks -->
<div class="a" style="left:632px;top:245px;width:128px;height:690px;background:#800000"></div>
<div class="a" style="left:760px;top:245px;width:64px;height:690px;background:#ff6600"></div>
<!-- row 159 red band -->
<div class="a" style="left:25px;top:262px;width:608px;height:18px;background:#800000;border-top:1px solid #ff6600;border-bottom:1px solid #ff6600"></div>
<!-- rows 185-188 red band -->
<div class="a" style="left:25px;top:629px;width:608px;height:69px;background:#800000;border-top:1px solid #ff6600;border-bottom:1px solid #ff6600"></div>
<!-- right orange border of black panels -->
<div class="a" style="left:631px;top:245px;width:1px;height:18px;background:#ff6600"></div>
<div class="a" style="left:631px;top:279px;width:1px;height:351px;background:#ff6600"></div>
<div class="a" style="left:631px;top:697px;width:1px;height:238px;background:#ff6600"></div>
<!-- K-L green/olive cells -->
<div class="a" style="left:632px;top:462px;width:64px;height:110px;background:#003300"></div>
<div class="a" style="left:696px;top:462px;width:64px;height:110px;background:#808000"></div>
<div class="a" style="left:632px;top:922px;width:64px;height:13px;background:#003300"></div>
<div class="a" style="left:696px;top:922px;width:64px;height:13px;background:#808000"></div>
<!-- text box 7 -->
<div class="a t o" style="left:82.5px;top:299px;font-size:12.5px;line-height:14px">7.</div>
<div class="a" style="left:95px;top:296px;width:516px;height:121px;border:1px solid #ff6600;background:#000"></div>
<div class="a t y bx" id="b7l1" style="left:98px;top:304.9px">Το <b class="o">κορεσμένο μονοκαρβονικό οξύ Α,</b> με <b class="o">ΜΤ C<sub>ν</sub>H<sub>2ν</sub>O<sub>2</sub>,</b> αντιδρά με την <b class="o">κορεσμένη μο-</b></div>
<div class="a t y bx" id="b7l2" style="left:98px;top:324.6px"><b class="o">νοσθενή αλκοόλη Β,</b> που έχει <b class="o">ΜΤ C<sub>ν</sub>H<sub>2ν+2</sub>O,</b> οπότε σχηματίζεται ο <b class="o">εστέρας Γ.</b></div>
<div class="a t y bx" id="b7l3" style="left:98px;top:342.2px">Με βάση τα παραπάνω στοιχεία ζητείται να συμπληρωθούν τα κενά στον πίνακα που</div>
<div class="a t y bx" id="b7l4" style="left:98px;top:359.2px">ακολουθεί. Οι ζητούμενες ονομασίες (κατά IUPAC) να γραφούν με <b class="o">ΚΕΦΑΛΑΙΑ ΕΛΛΗ-</b></div>
<div class="a t y bx" id="b7l5" style="left:98px;top:376.2px"><b class="o">ΝΙΚΑ γράμματα</b> και αν χρειαστεί να γίνει χρήση αριθμών, αυτοί να συνδέονται με το</div>
<div class="a t y bx" id="b7l6" style="left:98px;top:393.4px">υπόλοιπο μέρος του ονόματος με παύλα, π.χ. <b class="o">3-ΠΕΝΤΑΝΟΝΗ.</b></div>

<!-- table 7 -->
<div class="a" style="left:25px;top:462px;width:71px;height:111px;background:#800000"></div>
<div class="a" style="left:95px;top:424px;width:516px;height:39px;background:#003300"></div>
<div class="a" style="left:224px;top:462px;width:387px;height:111px;background:#ff6600"></div>
<!-- h lines -->
<div class="a hl" style="left:95px;top:424px;width:516px"></div>
<div class="a hl" style="left:25px;top:462px;width:586px"></div>
<div class="a hl" style="left:25px;top:498px;width:586px"></div>
<div class="a hl" style="left:25px;top:532px;width:586px"></div>
<div class="a hl" style="left:470px;top:552px;width:141px"></div>
<div class="a hl" style="left:25px;top:572px;width:586px"></div>
<!-- v lines -->
<div class="a vl" style="left:95px;top:424px;height:149px"></div>
<div class="a vl" style="left:159px;top:424px;height:149px"></div>
<div class="a vl" style="left:223px;top:424px;height:149px"></div>
<div class="a vl" style="left:287px;top:424px;height:149px"></div>
<div class="a vl" style="left:351px;top:424px;height:149px"></div>
<div class="a vl" style="left:470px;top:424px;height:149px"></div>
<div class="a vl" style="left:610px;top:424px;height:149px"></div>
<!-- header text -->
<div class="a t o hc" style="left:96px;width:63px;top:435.3px">n<sub>Γ</sub>(mol)</div>
<div class="a t o hc" style="left:160px;width:63px;top:435.3px">m<sub>Γ</sub>(g)</div>
<div class="a t o hc" style="left:224px;width:63px;top:435.3px">M<sub>r(Γ)</sub></div>
<div class="a t o hc" style="left:288px;width:63px;top:426.5px">τιμή του</div>
<div class="a t o hc" style="left:288px;width:63px;top:443px">ν</div>
<div class="a t o hc" style="left:352px;width:118px;top:426.5px">ΟΝΟΜΑΣΙΑ</div>
<div class="a t o hc" style="left:352px;width:118px;top:443px">ΕΝΩΣΗΣ Α</div>
<div class="a t o hc" style="left:471px;width:139px;top:426.5px">ΟΝΟΜΑΣΙΑ</div>
<div class="a t o hc" style="left:471px;width:139px;top:443px">ΕΝΩΣΗΣ Β</div>
<!-- data text -->
<div class="a t y hc" style="left:25px;width:70px;top:471.5px">α.</div>
<div class="a t y hc" style="left:25px;width:70px;top:506.5px">β.</div>
<div class="a t y hc" style="left:25px;width:70px;top:543.5px">γ.</div>
<div class="a t y hc" style="left:96px;width:63px;top:471.5px">0,2</div>
<div class="a t y hc" style="left:96px;width:63px;top:506.5px">0,4</div>
<div class="a t y hc" style="left:96px;width:63px;top:543.5px">0,15</div>
<div class="a t y hc" style="left:160px;width:63px;top:471.5px">12</div>
<div class="a t y hc" style="left:160px;width:63px;top:506.5px">35,2</div>
<div class="a t y hc" style="left:160px;width:63px;top:543.5px">17,4</div>
<!-- K-L cell borders -->
<div class="a" style="left:632px;top:462px;width:128px;height:1px;background:#ff6600"></div>
<div class="a" style="left:632px;top:498px;width:128px;height:1px;background:#ff6600"></div>
<div class="a" style="left:632px;top:532px;width:128px;height:1px;background:#ff6600"></div>
<div class="a" style="left:632px;top:572px;width:128px;height:1px;background:#ff6600"></div>
<div class="a" style="left:695px;top:462px;width:1px;height:111px;background:#ff6600"></div>
<div class="a" style="left:632px;top:921px;width:128px;height:1px;background:#ff6600"></div>
<div class="a" style="left:695px;top:921px;width:1px;height:14px;background:#ff6600"></div>
<!-- OXIDOSI box -->
<div class="a" style="left:95px;top:646px;width:193px;height:35px;background:#003300;border:1px solid #ffff99"></div>
<div class="a t o" id="oxi" style="left:95px;width:193px;top:652.6px;text-align:center;font-size:18.67px;line-height:21px">ΟΞΕΙΔΩΣΗ</div>
<!-- text box 8 -->
<div class="a t o" style="left:82.5px;top:717px;font-size:12.5px;line-height:14px">8.</div>
<div class="a" style="left:95px;top:714px;width:516px;height:81px;border:1px solid #ff6600;background:#000"></div>
<div class="a t y bx" id="b8l1" style="left:98px;top:720.2px">Στην άσκηση που ακολουθεί ζητείται να επιλεγεί με αναγραφή του γράμματος <b class="o">"Σ"</b> στο</div>
<div class="a t y bx" id="b8l2" style="left:98px;top:737.4px">διπλανό κελί, ένας από τους χαρακτηρισμούς, που δίνονται στα κόκκινα κελιά <b class="o">(Ιταγής-</b></div>
<div class="a t y bx" id="b8l3" style="left:98px;top:754.4px"><b class="o">ΙΙταγής-ΙΙΙταγής),</b> για μια αλκοόλη, ανάλογα με την συμπεριφορά της απέναντι στα <b class="o">συ-</b></div>
<div class="a t y bx" id="b8l4" style="left:98px;top:771.9px"><b class="o">νηθισμένα</b> οξειδωτικά μέσα, π.χ. <b class="o">KMnO<sub>4</sub>, KCr<sub>2</sub>O<sub>7</sub></b> κλπ.</div>

<!-- small table 1 -->
<div class="a" style="left:95px;top:802px;width:376px;height:58px;background:#003300"></div>
<div class="a" style="left:351px;top:802px;width:64px;height:58px;background:#800000"></div>
<div class="a" style="left:415px;top:802px;width:56px;height:58px;background:#ff6600"></div>
<div class="a hl" style="left:95px;top:802px;width:376px"></div>
<div class="a hl" style="left:351px;top:822px;width:120px"></div>
<div class="a hl" style="left:351px;top:842px;width:120px"></div>
<div class="a hl" style="left:95px;top:859px;width:376px"></div>
<div class="a vl" style="left:95px;top:802px;height:58px"></div>
<div class="a vl" style="left:351px;top:802px;height:58px"></div>
<div class="a vl" style="left:415px;top:802px;height:58px"></div>
<div class="a vl" style="left:470px;top:802px;height:58px"></div>
<div class="a t y bx sm" style="left:96px;width:255px;text-align:center;top:805.7px">Η αλκοόλη <b class="o">Α οξειδώνεται</b> από τα συνηθι-</div>
<div class="a t y bx" style="left:96px;width:255px;text-align:center;top:822.9px">σμένα οξειδωτικά μέσα, προς <b class="o">κετόνη,</b> άρα</div>
<div class="a t y bx sm" style="left:96px;width:255px;text-align:center;top:839.8px">είναι…</div>
<div class="a t y tg" style="left:352px;width:63px;top:804px">Ιταγής</div>
<div class="a t y tg" style="left:352px;width:63px;top:824px">ΙΙταγής</div>
<div class="a t y tg" style="left:352px;width:63px;top:843px">ΙΙΙταγής</div>

<!-- small table 2 -->
<div class="a" style="left:95px;top:865px;width:376px;height:52px;background:#003300"></div>
<div class="a" style="left:351px;top:865px;width:64px;height:52px;background:#800000"></div>
<div class="a" style="left:415px;top:865px;width:56px;height:52px;background:#ff6600"></div>
<div class="a hl" style="left:95px;top:865px;width:376px"></div>
<div class="a hl" style="left:351px;top:882px;width:120px"></div>
<div class="a hl" style="left:351px;top:899px;width:120px"></div>
<div class="a hl" style="left:95px;top:916px;width:376px"></div>
<div class="a vl" style="left:95px;top:865px;height:52px"></div>
<div class="a vl" style="left:351px;top:865px;height:52px"></div>
<div class="a vl" style="left:415px;top:865px;height:52px"></div>
<div class="a vl" style="left:470px;top:865px;height:52px"></div>
<div class="a t y bx sm" style="left:96px;width:255px;text-align:center;top:874.4px">Η αλκοόλη <b class="o">Β δεν οξειδώνεται</b> από τα συ-</div>
<div class="a t y bx" style="left:96px;width:255px;text-align:center;top:891.3px">νηθισμένα οξειδωτικά μέσα, άρα είναι…</div>
<div class="a tg y" style="left:352px;width:63px;top:866px;height:16px;overflow:hidden"><div class="a t" style="left:0;width:63px;top:0px">Ιταγής</div></div>
<div class="a tg y" style="left:352px;width:63px;top:883px;height:16px;overflow:hidden"><div class="a t" style="left:0;width:63px;top:0px">ΙΙταγής</div></div>
<div class="a tg y" style="left:352px;width:63px;top:900px;height:16px;overflow:hidden"><div class="a t" style="left:0;width:63px;top:0px">ΙΙΙταγής</div></div>

<!-- small table 3 (clipped) -->
<div class="a" style="left:95px;top:922px;width:376px;height:20px;background:#003300"></div>
<div class="a" style="left:351px;top:922px;width:64px;height:20px;background:#800000"></div>
<div class="a" style="left:415px;top:922px;width:56px;height:20px;background:#ff6600"></div>
<div class="a hl" style="left:95px;top:922px;width:376px"></div>
<div class="a vl" style="left:95px;top:922px;height:20px"></div>
<div class="a vl" style="left:351px;top:922px;height:20px"></div>
<div class="a vl" style="left:415px;top:922px;height:20px"></div>
<div class="a vl" style="left:470px;top:922px;height:20px"></div>
<div class="a t y bx sm" style="left:96px;width:255px;text-align:center;top:923.7px">Η αλκοόλη <b class="o">Γ οξειδώνεται</b> από τα συνηθι-</div>
<div class="a t y tg" style="left:352px;width:63px;top:923px">Ιταγής</div>
<!-- M160 box -->
<div class="a" style="left:760px;top:279px;width:129px;height:98px;background:#333300;border:1px solid #ffff99"></div>
<div class="a" style="left:761px;top:280px;width:127px;height:56px;background:#003300"></div>
<div class="a hl" style="left:760px;top:336px;width:129px"></div>
<div class="a t y bx" id="m1" style="left:761px;width:127px;text-align:center;top:283.2px">Να εμφανιστεί η</div>
<div class="a t y bx" id="m2" style="left:761px;width:127px;text-align:center;top:300.2px">λύση του</div>
<div class="a t bx" id="m3" style="left:761px;width:127px;text-align:center;top:317px"><b class="o">προβλήματος 7γ;</b></div>
<svg class="a" style="left:881px;top:280px" width="7" height="7"><path d="M0 0 L7 0 L7 7 Z" fill="#ff0000"/></svg>
<!-- comment -->
<svg class="a" style="left:880px;top:262px" width="30" height="26"><path d="M23.5 8 L9 17.5" stroke="#ffcc00" stroke-width="1" fill="none"/><path d="M5.5 20.5 L13 19 L9.5 13.5 Z" fill="#ffcc00"/></svg>
<div class="a" style="left:903px;top:269px;width:142px;height:91px;border:1px solid #ffcc00;background:linear-gradient(to bottom right,#9dd100 0%,#94c500 20%,#80a900 40%,#698800 57%,#506700 74%,#3a4a00 90%,#2f3d00 100%)"></div>
<div class="a t cm" id="c1" style="left:905.5px;top:283.5px">Η λύση του προβλήματος θα</div>
<div class="a t cm" id="c2" style="left:905.5px;top:297.7px">εμφανιστεί στο διπλανό χώ-</div>
<div class="a t cm" id="c3" style="left:905.5px;top:311.5px">ρο, αν στο κελί <b>M163</b> γρά-</div>
<div class="a t cm" id="c4" style="left:905.5px;top:325.7px">ψεις τη λέξη <b>"ναι".</b></div>

<!-- VOITHEIA arrow -->
<svg class="a" style="left:645px;top:712px" width="245" height="70" viewBox="645 712 245 70">
<defs><linearGradient id="ag" x1="0" y1="0" x2="0" y2="1"><stop offset="0" stop-color="#76760e"/><stop offset="0.35" stop-color="#88881e"/><stop offset="1" stop-color="#a0a03a"/></linearGradient></defs>
<g fill="#1c1c00" stroke="#1c1c00" stroke-width="1.2" transform="translate(0.9 1)">
<rect x="651.5" y="731.5" width="7.5" height="29"/><rect x="666.5" y="731.5" width="14.5" height="29"/>
<path d="M688.5 731.5 L827.5 731.5 L827.5 717.5 L884 746.3 L827.5 775 L827.5 760.5 L688.5 760.5 Z"/></g>
<g fill="#8e8e24" stroke="#3c3c08" stroke-width="1" stroke-linejoin="miter">
<rect x="651.5" y="731.5" width="7.5" height="29"/>
<rect x="666.5" y="731.5" width="14.5" height="29"/>
<path d="M688.5 731.5 L827.5 731.5 L827.5 717.5 L884 746.3 L827.5 775 L827.5 760.5 L688.5 760.5 Z"/>
</g>
<rect x="702" y="733.5" width="120" height="25" fill="url(#ag)"/>
</svg>
<div class="a t" id="voi" style="left:725.5px;top:738px;font-size:16px;font-weight:bold;color:#111;line-height:18px">ΒΟΗΘΕΙΑ</div>

<!-- right help text -->
<div class="a t y bx" id="r1" style="left:891px;top:737.4px"><span id="r1a">Όλες οι αλκοόλες δεν παρουσιάζουν την ίδια συμπεριφορά</span> απέναντι στα οξειδωτικά μέσα</div>
<div class="a t y bx" id="r2" style="left:891px;top:753.9px">ντες.</div>
<div class="a t y bx" id="r3" style="left:891px;top:776.2px"><span id="r3a">Έτσι οι <b style="color:#ff6600;font-size:13.4px">Ιταγείς αλκοόλες οξειδώνονται σε δυο στάδια,</b></span> αρχικά προς την αντίστοιχη</div>
<div class="a t y bx" id="r4" style="left:891px;top:792.9px">καρβονυλική ένωση, που στην περίπτωση των Ιταγών αλκοολών</div>
<div class="a t y bx" id="r5" style="left:891px;top:809.7px">συνέχεια προς το αντίστοιχο <b class="o">καρβονικό οξύ.</b> Αυτό δείχνεται με</div>
<div class="a t y bx" id="r6" style="left:891px;top:827px">εξισώσεις.</div>
<div class="a t y eq" id="e1a" style="left:995.8px;top:845.6px"><b>R–CH<sub>2</sub>–OH</b></div>
<div class="a t eq" style="left:1081.5px;top:845.6px;color:#ff0000"><b>+</b></div>
<div class="a t eq" id="e1c" style="left:1099px;top:845.6px;color:#990000;font-weight:bold">IOI</div>
<svg class="a" style="left:1126.5px;top:850.5px" width="17" height="9"><path d="M0.5 4.5 H14" stroke="#ff0000" stroke-width="1.4" fill="none"/><path d="M10.5 1 L15.5 4.5 L10.5 8" stroke="#ff0000" stroke-width="1.4" fill="none"/></svg>
<div class="a t y eq" id="e1e" style="left:1150.7px;top:845.6px"><b>R–CH=O</b></div>
<div class="a t eq" style="left:1221px;top:845.6px;color:#ff0000"><b>+</b></div>
<div class="a t y eq" id="e1g" style="left:1237.3px;top:845.6px"><b>H<sub>2</sub>O</b></div>
<div class="a t y eq" id="e2a" style="left:998.3px;top:865.4px"><b>R–CH=O</b></div>
<div class="a t eq" style="left:1068.5px;top:865.4px;color:#ff0000"><b>+</b></div>
<div class="a t eq" id="e2c" style="left:1085.8px;top:865.4px;color:#990000;font-weight:bold">IOI</div>
<svg class="a" style="left:1113px;top:870.3px" width="17" height="9"><path d="M0.5 4.5 H14" stroke="#ff0000" stroke-width="1.4" fill="none"/><path d="M10.5 1 L15.5 4.5 L10.5 8" stroke="#ff0000" stroke-width="1.4" fill="none"/></svg>
<div class="a t y eq" id="e2e" style="left:1137.6px;top:865.4px"><b>R–CO–OH</b></div>
<div class="a t y bx" id="r7" style="left:891px;top:887.2px"><span id="r7a">Σύμφωνα με τα παραπάνω αν θεωρήσουμε για παράδειγμα την</span></div>
<div class="a t y bx" id="r8" style="left:891px;top:904px"><span id="r8a">ξειδωθεί σε <b class="o">προπανάλη</b> και στη συνέχεια, εφόσον υπάρχει</span> επιπλέον</div>
<div class="a t y bx" id="r9" style="left:891px;top:920.7px"><span id="r9a">μέσο, θα οξειδωθεί σε <b class="o">προπανικό οξύ,</b> κατά τις παρακάτω</span> εξισώσεις</div>
</div>
<!-- ROW HEADERS -->
<div class="a" style="left:0;top:246px;width:25px;height:688px;background:#fff;overflow:hidden">
<div class="a rh" style="top:0px;height:17px;border-bottom:1px solid #d6d6d6"><div class="a" style="left:0;width:24px;bottom:0px;line-height:15px;transform-origin:50% 100%;transform:scaleX(0.9)">158</div></div>
<div class="a rh" style="top:17px;height:17px;border-bottom:1px solid #d6d6d6"><div class="a" style="left:0;width:24px;bottom:0px;line-height:15px;transform-origin:50% 100%;transform:scaleX(0.9)">159</div></div>
<div class="a rh" style="top:34px;height:17px;border-bottom:1px solid #d6d6d6"><div class="a" style="left:0;width:24px;bottom:0px;line-height:15px;transform-origin:50% 100%;transform:scaleX(0.9)">160</div></div>
<div class="a rh" style="top:51px;height:20px;border-bottom:1px solid #d6d6d6"><div class="a" style="left:0;width:24px;bottom:0px;line-height:15px;transform-origin:50% 100%;transform:scaleX(0.9)">161</div></div>
<div class="a rh" style="top:71px;height:20px;border-bottom:1px solid #d6d6d6"><div class="a" style="left:0;width:24px;bottom:0px;line-height:15px;transform-origin:50% 100%;transform:scaleX(0.9)">162</div></div>
<div class="a rh" style="top:91px;height:20px;border-bottom:1px solid #d6d6d6"><div class="a" style="left:0;width:24px;bottom:0px;line-height:15px;transform-origin:50% 100%;transform:scaleX(0.9)">163</div></div>
<div class="a rh" style="top:111px;height:20px;border-bottom:1px solid #d6d6d6"><div class="a" style="left:0;width:24px;bottom:0px;line-height:15px;transform-origin:50% 100%;transform:scaleX(0.9)">164</div></div>
<div class="a rh" style="top:131px;height:20px;border-bottom:1px solid #d6d6d6"><div class="a" style="left:0;width:24px;bottom:0px;line-height:15px;transform-origin:50% 100%;transform:scaleX(0.9)">165</div></div>
<div class="a rh" style="top:151px;height:19px;border-bottom:1px solid #d6d6d6"><div class="a" style="left:0;width:24px;bottom:0px;line-height:15px;transform-origin:50% 100%;transform:scaleX(0.9)">166</div></div>
<div class="a rh" style="top:170px;height:8px;border-bottom:1px solid #d6d6d6"><div class="a" style="left:0;width:24px;bottom:0px;line-height:15px;transform-origin:50% 100%;transform:scaleX(0.9)">167</div></div>
<div class="a rh" style="top:178px;height:20px;border-bottom:1px solid #d6d6d6"><div class="a" style="left:0;width:24px;bottom:0px;line-height:15px;transform-origin:50% 100%;transform:scaleX(0.9)">168</div></div>
<div class="a rh" style="top:198px;height:19px;border-bottom:1px solid #d6d6d6"><div class="a" style="left:0;width:24px;bottom:0px;line-height:15px;transform-origin:50% 100%;transform:scaleX(0.9)">169</div></div>
<div class="a rh" style="top:217px;height:17px;border-bottom:1px solid #d6d6d6"><div class="a" style="left:0;width:24px;bottom:0px;line-height:15px;transform-origin:50% 100%;transform:scaleX(0.9)">170</div></div>
<div class="a rh" style="top:234px;height:19px;border-bottom:1px solid #d6d6d6"><div class="a" style="left:0;width:24px;bottom:0px;line-height:15px;transform-origin:50% 100%;transform:scaleX(0.9)">171</div></div>
<div class="a rh" style="top:253px;height:17px;border-bottom:1px solid #d6d6d6"><div class="a" style="left:0;width:24px;bottom:0px;line-height:15px;transform-origin:50% 100%;transform:scaleX(0.9)">172</div></div>
<div class="a rh" style="top:270px;height:17px;border-bottom:1px solid #d6d6d6"><div class="a" style="left:0;width:24px;bottom:0px;line-height:15px;transform-origin:50% 100%;transform:scaleX(0.9)">173</div></div>
<div class="a rh" style="top:287px;height:20px;border-bottom:1px solid #d6d6d6"><div class="a" style="left:0;width:24px;bottom:0px;line-height:15px;transform-origin:50% 100%;transform:scaleX(0.9)">174</div></div>
<div class="a rh" style="top:307px;height:20px;border-bottom:1px solid #d6d6d6"><div class="a" style="left:0;width:24px;bottom:0px;line-height:15px;transform-origin:50% 100%;transform:scaleX(0.9)">175</div></div>
<div class="a rh" style="top:327px;height:20px;border-bottom:1px solid #d6d6d6"><div class="a" style="left:0;width:24px;bottom:0px;line-height:15px;transform-origin:50% 100%;transform:scaleX(0.9)">176</div></div>
<div class="a rh" style="top:347px;height:21px;border-bottom:1px solid #d6d6d6"><div class="a" style="left:0;width:24px;bottom:0px;line-height:15px;transform-origin:50% 100%;transform:scaleX(0.9)">177</div></div>
<div class="a rh" style="top:368px;height:16px;border-bottom:1px solid #d6d6d6"><div class="a" style="left:0;width:24px;bottom:0px;line-height:15px;transform-origin:50% 100%;transform:scaleX(0.9)">184</div></div>
<div class="a rh" style="top:384px;height:17px;border-bottom:1px solid #d6d6d6"><div class="a" style="left:0;width:24px;bottom:0px;line-height:15px;transform-origin:50% 100%;transform:scaleX(0.9)">185</div></div>
<div class="a rh" style="top:401px;height:17px;border-bottom:1px solid #d6d6d6"><div class="a" style="left:0;width:24px;bottom:0px;line-height:15px;transform-origin:50% 100%;transform:scaleX(0.9)">186</div></div>
<div class="a rh" style="top:418px;height:17px;border-bottom:1px solid #d6d6d6"><div class="a" style="left:0;width:24px;bottom:0px;line-height:15px;transform-origin:50% 100%;transform:scaleX(0.9)">187</div></div>
<div class="a rh" style="top:435px;height:17px;border-bottom:1px solid #d6d6d6"><div class="a" style="left:0;width:24px;bottom:0px;line-height:15px;transform-origin:50% 100%;transform:scaleX(0.9)">188</div></div>
<div class="a rh" style="top:452px;height:17px;border-bottom:1px solid #d6d6d6"><div class="a" style="left:0;width:24px;bottom:0px;line-height:15px;transform-origin:50% 100%;transform:scaleX(0.9)">189</div></div>
<div class="a rh" style="top:469px;height:20px;border-bottom:1px solid #d6d6d6"><div class="a" style="left:0;width:24px;bottom:0px;line-height:15px;transform-origin:50% 100%;transform:scaleX(0.9)">190</div></div>
<div class="a rh" style="top:489px;height:20px;border-bottom:1px solid #d6d6d6"><div class="a" style="left:0;width:24px;bottom:0px;line-height:15px;transform-origin:50% 100%;transform:scaleX(0.9)">191</div></div>
<div class="a rh" style="top:509px;height:20px;border-bottom:1px solid #d6d6d6"><div class="a" style="left:0;width:24px;bottom:0px;line-height:15px;transform-origin:50% 100%;transform:scaleX(0.9)">192</div></div>
<div class="a rh" style="top:529px;height:20px;border-bottom:1px solid #d6d6d6"><div class="a" style="left:0;width:24px;bottom:0px;line-height:15px;transform-origin:50% 100%;transform:scaleX(0.9)">193</div></div>
<div class="a rh" style="top:549px;height:7px;border-bottom:1px solid #d6d6d6"><div class="a" style="left:0;width:24px;bottom:0px;line-height:15px;transform-origin:50% 100%;transform:scaleX(0.9)">194</div></div>
<div class="a rh" style="top:556px;height:20px;border-bottom:1px solid #d6d6d6"><div class="a" style="left:0;width:24px;bottom:0px;line-height:15px;transform-origin:50% 100%;transform:scaleX(0.9)">195</div></div>
<div class="a rh" style="top:576px;height:20px;border-bottom:1px solid #d6d6d6"><div class="a" style="left:0;width:24px;bottom:0px;line-height:15px;transform-origin:50% 100%;transform:scaleX(0.9)">196</div></div>
<div class="a rh" style="top:596px;height:17px;border-bottom:1px solid #d6d6d6"><div class="a" style="left:0;width:24px;bottom:0px;line-height:15px;transform-origin:50% 100%;transform:scaleX(0.9)">197</div></div>
<div class="a rh" style="top:613px;height:6px;border-bottom:1px solid #d6d6d6"><div class="a" style="left:0;width:24px;bottom:0px;line-height:15px;transform-origin:50% 100%;transform:scaleX(0.9)">198</div></div>
<div class="a rh" style="top:619px;height:17px;border-bottom:1px solid #d6d6d6"><div class="a" style="left:0;width:24px;bottom:0px;line-height:15px;transform-origin:50% 100%;transform:scaleX(0.9)">199</div></div>
<div class="a rh" style="top:636px;height:17px;border-bottom:1px solid #d6d6d6"><div class="a" style="left:0;width:24px;bottom:0px;line-height:15px;transform-origin:50% 100%;transform:scaleX(0.9)">200</div></div>
<div class="a rh" style="top:653px;height:17px;border-bottom:1px solid #d6d6d6"><div class="a" style="left:0;width:24px;bottom:0px;line-height:15px;transform-origin:50% 100%;transform:scaleX(0.9)">201</div></div>
<div class="a rh" style="top:670px;height:6px;border-bottom:1px solid #d6d6d6"><div class="a" style="left:0;width:24px;bottom:0px;line-height:15px;transform-origin:50% 100%;transform:scaleX(0.9)">202</div></div>
<div class="a rh" style="top:676px;height:19px;border-bottom:1px solid #d6d6d6"><div class="a" style="left:0;width:24px;bottom:0px;line-height:15px;transform-origin:50% 100%;transform:scaleX(0.9)">203</div></div>
<div class="a" style="left:0;top:364px;width:25px;height:1px;background:#d6d6d6"></div>
</div>
<!-- VERTICAL SCROLLBAR -->
<div class="a" style="left:1258px;top:226px;width:22px;height:736px;background:#fff"></div>
<div class="a" style="left:1262px;top:245px;width:15px;height:676px;background:#f1f1f1"></div>
<div class="a" style="left:1262px;top:231px;width:15px;height:15px;border:1px solid #ababab;background:#fff"></div>
<svg class="a" style="left:1265.5px;top:236px" width="8" height="6"><path d="M0 5 L4 0.5 L8 5 Z" fill="#777"/></svg>
<div class="a" style="left:1262px;top:407px;width:15px;height:39px;border:1px solid #ababab;background:#fff"></div>
<div class="a" style="left:1262px;top:920px;width:15px;height:14.5px;border:1px solid #ababab;background:#fff"></div>
<svg class="a" style="left:1265.5px;top:925.5px" width="8" height="6"><path d="M0 0.5 L8 0.5 L4 5 Z" fill="#777"/></svg>
<!-- SHEET TAB BAR -->
<div class="a" style="left:0;top:934px;width:1280px;height:28px;background:#f5f5f5"></div>
<div class="a" style="left:1024px;top:941px;width:221px;height:15px;background:#e8e8e8"></div>
<svg class="a" style="left:25px;top:942.5px" width="8" height="10"><path d="M6.5 0.5 L1.5 5 L6.5 9.5 Z" fill="#c6c6c6"/></svg>
<svg class="a" style="left:54px;top:942.5px" width="8" height="10"><path d="M1.5 0.5 L6.5 5 L1.5 9.5 Z" fill="#c6c6c6"/></svg>
<div class="a" style="left:100px;top:934px;width:57px;height:25px;background:#fff;border-left:1px solid #c6c6c6;border-right:1px solid #c6c6c6;border-bottom:2px solid #217346"></div>
<div class="a t" id="toc" style="left:112.8px;top:940px;font-size:12.5px;transform-origin:0 0;transform:scaleX(0.965);font-weight:bold;color:#217346;line-height:15px">TOC2</div>
<svg class="a" style="left:190.2px;top:940px" width="16" height="16"><circle cx="8" cy="8" r="7" fill="none" stroke="#6a6a6a" stroke-width="1.2"/><path d="M8 4.2 V11.8 M4.2 8 H11.8" stroke="#6a6a6a" stroke-width="1.6"/></svg>
<!-- H SCROLLBAR -->
<div class="a" style="left:760px;top:943px;width:2px;height:2px;background:#a0a0a0"></div>
<div class="a" style="left:760px;top:947px;width:2px;height:2px;background:#a0a0a0"></div>
<div class="a" style="left:760px;top:951px;width:2px;height:2px;background:#a0a0a0"></div>
<div class="a" style="left:777px;top:941px;width:15px;height:15px;border:1px solid #ababab;background:#fff"></div>
<svg class="a" style="left:781.5px;top:944.5px" width="6" height="8"><path d="M5.5 0 L0.5 4 L5.5 8 Z" fill="#777"/></svg>
<div class="a" style="left:791px;top:941px;width:233px;height:15px;border:1px solid #ababab;background:#fff"></div>
<div class="a" style="left:1244px;top:941px;width:15px;height:15px;border:1px solid #ababab;background:#fff"></div>
<svg class="a" style="left:1249.5px;top:944.5px" width="6" height="8"><path d="M0.5 0 L5.5 4 L0.5 8 Z" fill="#777"/></svg>
<!-- STATUS BAR -->
<div class="a" style="left:0;top:962px;width:1280px;height:22px;background:#217346"></div>
<div class="a" style="left:988px;top:962px;width:37px;height:22px;background:#1b6039"></div>
<svg class="a" style="left:1000px;top:966px" width="14" height="13"><rect x="0.5" y="0.5" width="13" height="12" fill="none" stroke="#fff"/><path d="M0.5 4.5 H13.5 M0.5 8.5 H13.5 M4.8 0.5 V12.5 M9.2 0.5 V12.5" stroke="#fff" fill="none"/></svg>
<svg class="a" style="left:1038px;top:966px" width="14" height="13"><rect x="0.5" y="0.5" width="13" height="12" fill="none" stroke="#fff"/><rect x="3.5" y="3.5" width="7" height="6" fill="none" stroke="#fff"/><path d="M5 6.5 H9" stroke="#fff"/></svg>
<svg class="a" style="left:1076px;top:966px" width="14" height="13"><rect x="0.5" y="0.5" width="13" height="12" fill="none" stroke="#fff"/><rect x="1" y="1" width="5" height="7" fill="#fff"/><rect x="8" y="1" width="5" height="5" fill="#fff"/></svg>
<div class="a" style="left:1106px;top:972px;width:6px;height:2px;background:#fff"></div>
<div class="a" style="left:1117px;top:972.5px;width:101px;height:1px;background:#fff"></div>
<div class="a" style="left:1164px;top:966px;width:4px;height:13px;background:#fff"></div>
<div class="a" style="left:1221px;top:972px;width:8px;height:2px;background:#fff"></div>
<div class="a" style="left:1224px;top:969px;width:2px;height:8px;background:#fff"></div>
<div class="a t" id="st1" style="left:7.0px;top:966.5px;font-size:11.6px;line-height:1;height:13.9px;color:#fff;transform-origin:0 0;transform:scaleX(0.9991);">Προέλευση σχολίου στο κελί M160: . .</div>
<div class="a t" id="st2" style="left:1243.5px;top:966.5px;font-size:11.6px;line-height:1;height:13.9px;color:#fff;transform-origin:0 0;transform:scaleX(0.9273);">100%</div>
<!-- TASKBAR -->
<div class="a" style="left:0;top:984px;width:1280px;height:40px;background:linear-gradient(90deg,#2c1b31 0%,#291b2a 28%,#2a1a2a 50%,#331735 62%,#3a1839 68%,#301a30 78%,#2a1c25 88%,#2a1f20 100%)"></div>
<!-- start -->
<svg class="a" style="left:16px;top:996px" width="17" height="17"><path d="M0 2.4 L7 1.4 V8 H0 Z M8 1.25 L17 0 V8 H8 Z M0 9 H7 V15.6 L0 14.6 Z M8 9 H17 V17 L8 15.75 Z" fill="#fff"/></svg>
<!-- search -->
<div class="a" style="left:48px;top:985px;width:288px;height:39px;background:#f3f3f3;border:1px solid #dcdcdc;border-bottom:none"></div>
<svg class="a" style="left:59px;top:995px" width="18" height="18"><circle cx="11" cy="7" r="5.2" fill="none" stroke="#333" stroke-width="1.4"/><path d="M7.2 10.8 L1.2 16.8" stroke="#333" stroke-width="1.6"/></svg>
<!-- task view -->
<svg class="a" style="left:351px;top:995px" width="18" height="17" viewBox="0 0 18 17"><g fill="none" stroke="#fff" stroke-width="1.3"><rect x="1.7" y="5.8" width="10.4" height="5.4"/><path d="M1.7 1.2 V3 H12.1 V1.2"/><path d="M1.7 15.8 V14 H12.1 V15.8"/><path d="M15.7 1.2 V4.2 M15.7 8.8 V16" stroke-width="1.2"/></g><rect x="14.4" y="5" width="2.6" height="3" fill="#fff"/></svg>
<!-- edge -->
<svg class="a" style="left:398.5px;top:991.5px" width="25" height="25" viewBox="0 0 26 26"><defs><linearGradient id="eg1" x1="0" y1="0" x2="0.3" y2="1"><stop offset="0" stop-color="#1a8fe0"/><stop offset="1" stop-color="#0b57a8"/></linearGradient><linearGradient id="eg2" x1="0" y1="0.2" x2="1" y2="0.6"><stop offset="0" stop-color="#1f9fe8"/><stop offset="0.45" stop-color="#31c4cf"/><stop offset="1" stop-color="#6fe04a"/></linearGradient></defs>
<circle cx="13" cy="13" r="12.3" fill="url(#eg1)"/>
<path d="M0.8 12 C1.5 5.5 7 0.7 13 0.7 C20 0.7 25.3 6 25.3 12.2 C25.3 16 22.5 18.3 19.3 18.3 C16.6 18.3 14.6 17 15 15.2 C15.6 12.6 13.5 10 10.3 10 C6 10 2.2 12.8 0.8 12 Z" fill="url(#eg2)"/>
<path d="M9.5 11.5 C7.5 16 10.5 22 17 24.6 C10.5 27 3.5 22.5 2 16.5 C4 13 7 11.3 9.5 11.5 Z" fill="#0e63b8"/>
<path d="M12 12.6 C13.8 11.4 15.6 12.8 15.2 14.8 C14.8 17 16.8 18.4 19.3 18.4 C22 18.4 24.6 16.8 25.3 13.8 L25.3 16.5 C24 19.6 20 21 17 20 C13.5 18.8 11.3 15.2 12 12.6 Z" fill="#2a1a2c"/></svg>
<!-- explorer -->
<svg class="a" style="left:448px;top:993px" width="24" height="21" viewBox="0 0 24 21"><path d="M1 2.5 H9 L11 4.5 H23 V19 H1 Z" fill="#e9a825"/><rect x="1" y="6" width="22" height="13.5" fill="#ffd969"/><rect x="1" y="6" width="22" height="2" fill="#ffe79a"/><path d="M6 20 V12.5 H18 V20 H14.5 V16 H9.5 V20 Z" fill="#3c9ae8"/></svg>
<div class="a" style="left:440px;top:1022px;width:40px;height:2px;background:#76b9ed"></div>
<!-- firefox -->
<svg class="a" style="left:496px;top:990px" width="26" height="27" viewBox="0 0 26 27"><defs><radialGradient id="fg1" cx="0.7" cy="0.15" r="1"><stop offset="0" stop-color="#fff36a"/><stop offset="0.3" stop-color="#ffb42a"/><stop offset="0.6" stop-color="#ff5a2c"/><stop offset="1" stop-color="#e31587"/></radialGradient><radialGradient id="fg2" cx="0.5" cy="0.4" r="0.6"><stop offset="0" stop-color="#9a5cf5"/><stop offset="1" stop-color="#5b2bbf"/></radialGradient></defs>
<path d="M13 3 C14 1.5 16.5 0.5 17.5 0 C17 2 18.5 4 20.5 6 C23 8.5 25 11.5 25 15.5 C25 22 19.5 26.5 13 26.5 C6.5 26.5 1 22 1 15.5 C1 12 2 9 4 7 C4 8.5 4.5 9.5 5 10 C5.5 7 8 4 13 3 Z" fill="url(#fg1)"/><circle cx="13.5" cy="15" r="6.3" fill="url(#fg2)"/><path d="M7 12 C9 9.5 12 10.5 13.5 12 C11 12 10 13.5 10.5 15.5 C8.5 15.5 7 14 7 12 Z" fill="#ff9a28"/></svg>
<div class="a" style="left:489px;top:1022px;width:40px;height:2px;background:#76b9ed"></div>
<!-- chrome -->
<svg class="a" style="left:545px;top:991px" width="26" height="26" viewBox="0 0 26 26"><circle cx="13" cy="13" r="12" fill="#fff"/><path d="M13 13 L2.6 7 A12 12 0 0 1 23.4 7 Z" fill="#e33b2e"/><path d="M13 13 L23.4 7 A12 12 0 0 1 13 25 Z" fill="#fbc016"/><path d="M13 13 L13 25 A12 12 0 0 1 2.6 7 Z" fill="#2ba24c"/><circle cx="13" cy="13" r="5.6" fill="#fff"/><circle cx="13" cy="13" r="4.4" fill="#4a8af4"/></svg>
<!-- calculator -->
<svg class="a" style="left:598px;top:991px" width="19" height="25" viewBox="0 0 19 25"><rect x="0" y="0" width="19" height="25" rx="1.5" fill="#7d8791"/><rect x="2.5" y="2.5" width="14" height="4.5" fill="#4fc3f7"/><g fill="#dfe4e8"><rect x="2.5" y="9" width="3.6" height="3.6"/><rect x="7.7" y="9" width="3.6" height="3.6"/><rect x="2.5" y="14" width="3.6" height="3.6"/><rect x="7.7" y="14" width="3.6" height="3.6"/><rect x="2.5" y="19" width="3.6" height="3.6"/><rect x="7.7" y="19" width="3.6" height="3.6"/><rect x="12.9" y="9" width="3.6" height="3.6"/></g><rect x="12.9" y="14" width="3.6" height="8.6" fill="#1565c0"/></svg>
<!-- pc -->
<svg class="a" style="left:644px;top:992px" width="25" height="22" viewBox="0 0 25 22"><path d="M9 1 L24 4.5 L23 13.5 L8.5 9.5 Z" fill="#3aa7ea"/><path d="M9 1 L24 4.5 L23.7 7 L8.8 3.3 Z" fill="#64c3f5"/><path d="M15 11.5 L18 12.3 L17.5 15 L14 14 Z" fill="#9aa4ad"/><path d="M11 14.5 L20 17 L17 18.8 L9 16.5 Z" fill="#c9d1d8"/><path d="M1 15.5 L9.5 14 L15 18.5 L5.5 21 Z" fill="#e4e9ee"/><path d="M1 15.5 L5.5 21 L5.5 21.8 L1 16.5 Z" fill="#9aa4ad"/></svg>
<!-- M icon -->
<svg class="a" style="left:693px;top:992px" width="24" height="24" viewBox="0 0 24 24"><rect width="24" height="24" fill="#00007e"/><path d="M2.5 18.5 V5 H8 L12 11 L16 5 H21.5 V18.5 H16.5 V12 L12 17.5 L7.5 12 V18.5 Z" fill="#f01818" stroke="#fff" stroke-width="1"/><rect x="1" y="19.2" width="22" height="2.6" fill="#2a52d8"/></svg>
<!-- excel active -->
<div class="a" style="left:730px;top:984px;width:48px;height:40px;background:#5a495e"></div>
<div class="a" style="left:730px;top:1022px;width:48px;height:2px;background:#76b9ed"></div>
<svg class="a" style="left:742px;top:992px" width="24" height="24" viewBox="0 0 24 24"><rect x="11" y="3" width="12" height="18" fill="#fff" stroke="#217346" stroke-width="1"/><path d="M14 6 H21 M14 9 H21 M14 12 H21 M14 15 H21 M14 18 H21 M17.5 4 V20" stroke="#217346" stroke-width="1.2" fill="none"/><path d="M0 2.5 L13.5 0 V24 L0 21.5 Z" fill="#217346"/><path d="M3.6 7.5 L9.4 16.5 M9.4 7.5 L3.6 16.5" stroke="#fff" stroke-width="2"/></svg>
<!-- weather -->
<svg class="a" style="left:880px;top:991px" width="27" height="26" viewBox="0 0 27 26"><g fill="none" stroke="#9bb8d6" stroke-width="2.3" stroke-linecap="round"><path d="M2 11 H17"/><path d="M2 15.5 H22 C25 15.5 25 20.5 21.5 20.5 C19.8 20.5 19 19.4 19.3 18.3" stroke="#7fa6cf"/><path d="M4 20 H13 C15.5 20 15.5 24 13 24"/></g><circle cx="20" cy="7" r="5.7" fill="#e0322f"/><text x="20" y="10.2" font-family="Liberation Sans" font-size="8.5" fill="#fff" text-anchor="middle">1</text></svg>
<!-- tray -->
<svg class="a" style="left:1036px;top:1000px" width="14" height="9"><path d="M1 8 L7 1.5 L13 8" stroke="#fff" stroke-width="1.5" fill="none"/></svg>
<svg class="a" style="left:1061px;top:995px" width="14" height="18" viewBox="0 0 14 18"><g fill="none" stroke="#fff" stroke-width="1.2"><rect x="2" y="5.5" width="7" height="7" rx="1.5"/><path d="M9 8 L12 6.5 V11.5 L9 10"/><path d="M3 3 C3 1 10 1 10 3 M3 15 C3 17 10 17 10 15"/></g></svg>
<svg class="a" style="left:1085px;top:998px" width="15" height="14" viewBox="0 0 15 14"><g fill="none" stroke="#8c8890" stroke-width="1.2"><path d="M1 13 C1 6 6 1 13.5 1"/><path d="M4.5 13 C4.5 8 8 4.5 13.5 4.5" stroke="#c9c6cc"/><path d="M8 13 C8 10 10 8 13.5 8" stroke="#fff"/></g><circle cx="11.5" cy="11.5" r="1.7" fill="#fff"/></svg>
<svg class="a" style="left:1106px;top:997px" width="19" height="15" viewBox="0 0 19 15"><path d="M1.5 5 H4.5 L8.5 1.5 V13.5 L4.5 10 H1.5 Z" fill="none" stroke="#fff" stroke-width="1.2"/><path d="M11 5 C12.2 6.3 12.2 8.7 11 10" stroke="#fff" stroke-width="1.2" fill="none"/><path d="M13.3 3.2 C15.5 5.5 15.5 9.5 13.3 11.8" stroke="#fff" stroke-width="1.2" fill="none"/><path d="M15.8 1.5 C18.8 5 18.8 10 15.8 13.5" stroke="#8c8890" stroke-width="1.2" fill="none"/></svg>
<!-- notification -->
<svg class="a" style="left:1239px;top:995px" width="26" height="25" viewBox="0 0 26 25"><path d="M1 1.5 H16 V12.5 H6 L3 15.5 V12.5 H1 Z" fill="#fff"/><path d="M3.5 4.5 H13.5 M3.5 7 H13.5 M3.5 9.5 H10" stroke="#2a1f20" stroke-width="1"/><circle cx="15.5" cy="15.5" r="8" fill="#2a1f20" stroke="#d0d0d0" stroke-width="1.3"/><text x="15.5" y="19.5" font-family="Liberation Sans" font-size="11" font-weight="bold" fill="#fff" text-anchor="middle" textLength="11" lengthAdjust="spacingAndGlyphs">21</text></svg>
<div class="a" style="left:1275px;top:984px;width:1px;height:40px;background:#6a6166"></div>
<div class="a t" id="tk1" style="left:88.0px;top:996.4px;font-size:15.0px;line-height:1;height:18.0px;color:#444;transform-origin:0 0;transform:scaleX(1.0556);">Αναζήτηση</div>
<div class="a t" id="tk2" style="left:915.0px;top:995.9px;font-size:14.5px;line-height:1;height:17.4px;color:#fff;transform-origin:0 0;transform:scaleX(0.9566);">15°C</div>
<div class="a t" id="tk3" style="left:952.0px;top:995.9px;font-size:14.5px;line-height:1;height:17.4px;color:#fff;transform-origin:0 0;transform:scaleX(0.9903);">Με άνεμο</div>
<div class="a t" id="tk4" style="left:1133.7px;top:996.9px;font-size:12.3px;line-height:1;height:14.8px;color:#fff;transform-origin:0 0;transform:scaleX(0.8178);">ENG</div>
<div class="a t" id="tk5" style="left:1176.2px;top:988.5px;font-size:11.6px;line-height:1;height:13.9px;color:#fff;transform-origin:0 0;transform:scaleX(0.9705);">3:26 μμ</div>
<div class="a t" id="tk6" style="left:1169.5px;top:1006.0px;font-size:11.6px;line-height:1;height:13.9px;color:#fff;transform-origin:0 0;transform:scaleX(0.9927);">25/5/2025</div>

</div></body></html>
